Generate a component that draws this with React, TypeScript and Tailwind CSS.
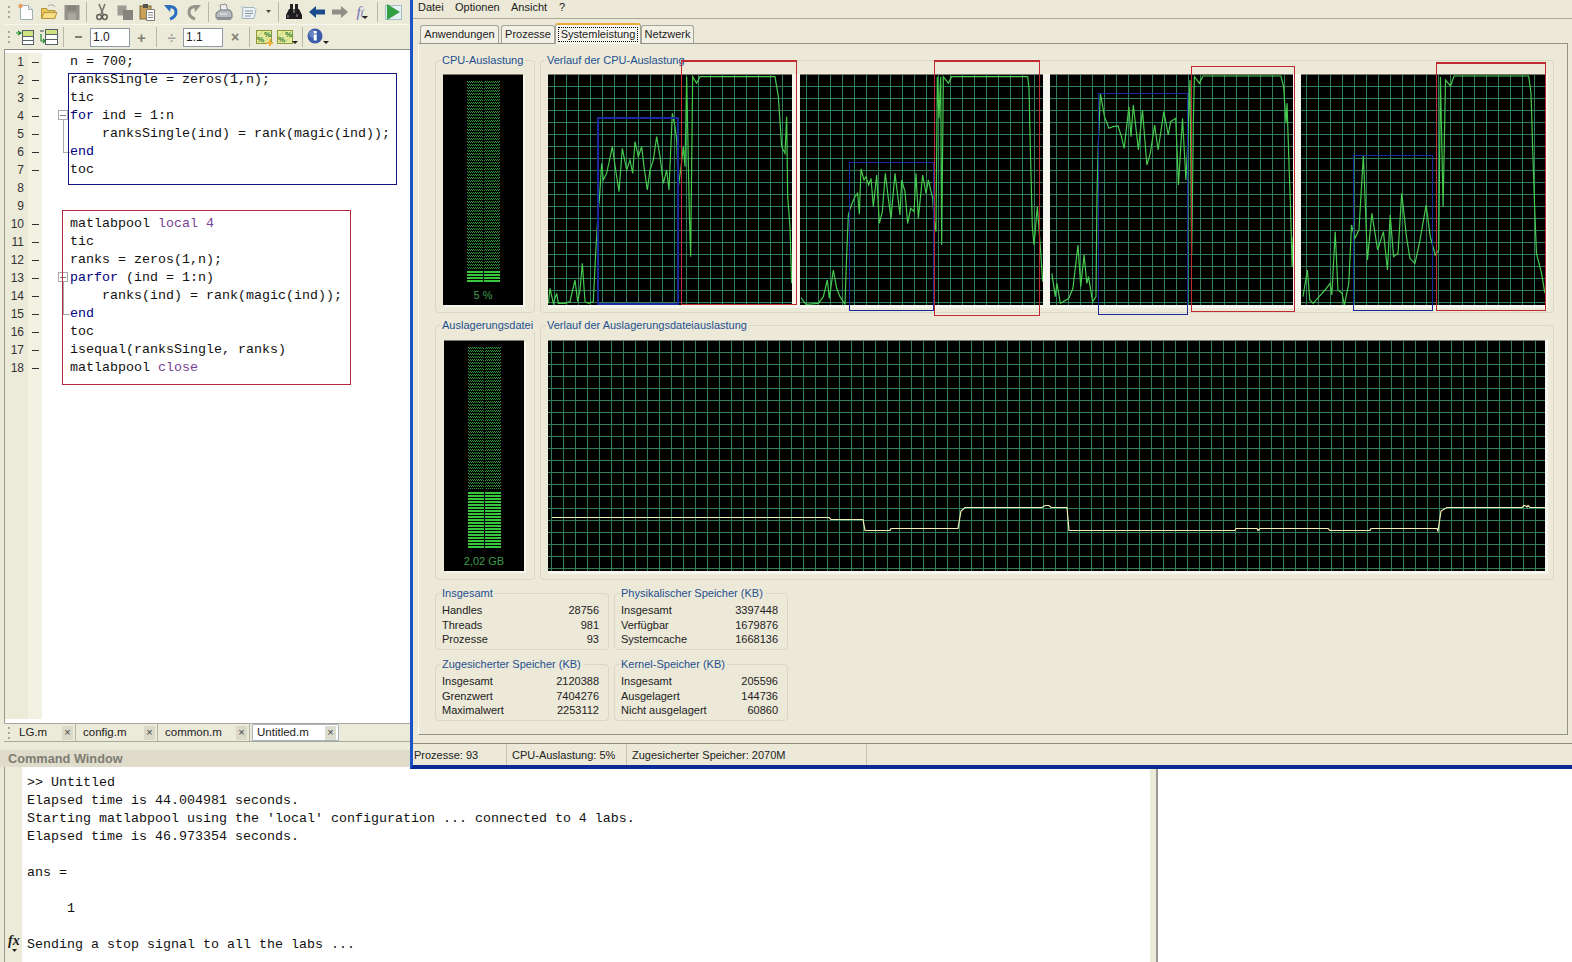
import type { ReactNode } from 'react';

const code: { text: ReactNode; fold?: 'start' | 'mid' | 'end' }[] = [
  { text: 'n = 700;' },
  { text: 'ranksSingle = zeros(1,n);' },
  { text: 'tic' },
  { text: <span className="text-[#000080]">for<span className="text-[#111]"> ind = 1:n</span></span>, fold: 'start' },
  { text: '    ranksSingle(ind) = rank(magic(ind));', fold: 'mid' },
  { text: <span className="text-[#000080]">end</span>, fold: 'end' },
  { text: 'toc' },
  { text: '' },
  { text: '' },
  { text: <>matlabpool <span className="text-[#7a3f96]">local 4</span></> },
  { text: 'tic' },
  { text: 'ranks = zeros(1,n);' },
  { text: <><span className="text-[#000080]">parfor</span> (ind = 1:n)</>, fold: 'start' },
  { text: '    ranks(ind) = rank(magic(ind));', fold: 'mid' },
  { text: <span className="text-[#000080]">end</span>, fold: 'end' },
  { text: 'toc' },
  { text: 'isequal(ranksSingle, ranks)' },
  { text: <>matlabpool <span className="text-[#7a3f96]">close</span></> },
];

const output = [
  '>> Untitled',
  'Elapsed time is 44.004981 seconds.',
  "Starting matlabpool using the 'local' configuration ... connected to 4 labs.",
  'Elapsed time is 46.973354 seconds.',
  '',
  'ans = ',
  '',
  '     1',
  '',
  'Sending a stop signal to all the labs ...',
];

// traced from the reference, [offset x, scale x, scale y]
const toPoints = (raw: string, ox: number, sx: number, oy: number) =>
  raw
    .split(' ')
    .map((p) => {
      const [a, b] = p.split(',').map(Number);
      return `${ox + a / sx},${oy + b / 3}`;
    })
    .join(' ');

const cpu1 = toPoints('415,910 420,865 430,910 440,880 445,910 465,910 480,905 495,840 503,905 510,870 517,790 525,905 535,910 550,905 557,760 565,625 568,600 575,490 580,540 590,520 607,440 617,510 627,575 637,445 650,510 660,480 668,520 675,425 685,470 695,440 702,500 712,570 720,510 730,480 740,410 750,470 760,550 770,510 777,570 787,340 795,380 800,420 805,560 812,510 820,440 825,500 830,230 838,640 842,770 848,230 860,250 870,230 1095,230 1105,290 1115,440 1125,460 1130,350 1133,590 1140,680 1145,850', 410, 3, 0);
const cpu2 = toPoints('33,728 48,748 85,745 100,725 112,675 118,730 130,645 140,700 150,725 165,748 170,600 175,480 182,455 195,425 203,415 208,478 213,342 222,375 228,365 236,390 243,370 250,455 260,360 268,505 277,470 286,355 295,430 303,490 315,355 330,480 335,375 345,410 353,505 362,460 372,470 378,355 385,490 398,360 408,415 415,375 428,430 432,490 438,530 442,65 447,190 452,65 455,570 460,65 475,85 485,65 713,65 717,100 722,320 727,515 732,570 742,455 752,590 758,680', 790, 3, 55);
const cpu3 = toPoints('35,670 45,740 50,700 60,760 85,745 97,715 112,585 120,710 130,615 138,700 143,680 155,755 165,740 168,430 172,280 178,130 190,200 203,235 215,230 230,228 240,260 248,295 262,170 268,260 275,165 290,300 302,180 315,345 325,310 338,225 348,300 365,185 378,255 385,215 400,205 408,405 420,205 430,390 434,310 442,90 447,615 452,210 455,80 470,100 480,78 710,78 718,110 725,220 728,160 735,380 738,460 743,650 746,560 750,650', 1040, 2.947, 50);
const cpu4 = toPoints('775,740 788,660 795,750 805,760 818,745 840,720 855,700 860,735 870,545 878,720 890,730 897,765 910,700 918,525 928,565 940,540 953,315 965,630 978,490 995,600 1012,545 1024,660 1032,495 1042,620 1055,610 1066,430 1080,560 1090,625 1105,640 1118,580 1138,465 1150,560 1165,615 1175,600 1180,80 1188,470 1195,90 1210,108 1220,78 1440,78 1447,130 1452,300 1458,480 1463,610 1478,670 1488,730', 1040, 2.947, 50);
const pageTrace = '552,517.5 829,517.5 831,519.5 863,519.5 865,530.5 890,530.5 891,528.5 958,528.5 961,511 965,507.5 1042,507.5 1045,505.5 1049,505.5 1051,507.5 1067,507.5 1069,530.5 1235,530.5 1236,528.5 1257,528.5 1258,530.5 1260,528.5 1328,528.5 1330,530.5 1370,530.5 1371,528.5 1437,528.5 1438,531 1441,511 1447,507.5 1522,507.5 1524,505.5 1526,506 1527,507 1528,505.5 1530,507.5 1545,507.5';

function Chart({ x, y, w, h, offset, points, color }: { x: number; y: number; w: number; h: number; offset: number; points: string; color: string }) {
  const verticals = Array.from({ length: Math.ceil(w / 12) }, (_, i) => x + offset + i * 12 + 0.5).filter((v) => v < x + w);
  const horizontals = Array.from({ length: Math.floor(h / 12) }, (_, i) => y + 12 + i * 12 + 0.5);
  return (
    <svg width={w} height={h} viewBox={`${x} ${y} ${w} ${h}`} className="block shrink-0 bg-black">
      <g stroke="#2f8059" strokeWidth="1" shapeRendering="crispEdges">
        {verticals.map((v) => <line key={v} x1={v} x2={v} y1={y} y2={y + h} />)}
        {horizontals.map((v) => <line key={v} x1={x} x2={x + w} y1={v} y2={v} />)}
      </g>
      <line x1={x} x2={x + w} y1={y + 0.5} y2={y + 0.5} stroke="#77776c" />
      <polyline points={points} fill="none" stroke={color} strokeWidth="1.2" />
    </svg>
  );
}

function Meter({ id, dimEnd, brightStart, label }: { id: string; dimEnd: number; brightStart: number; label: string }) {
  const bright: number[] = [];
  for (let r = brightStart; r < 207; r += 3) bright.push(r);
  return (
    <div className="flex h-[231px] w-[80px] flex-col items-center border-t border-[#77776c] bg-black shadow-[2px_2px_0_#f6f5ee]">
      <svg width="80" height="208" className="block shrink-0">
        <defs>
          <pattern id={id} width="2" height="3" patternUnits="userSpaceOnUse">
            <rect x="0" y="0" width="1" height="1" fill="#2f9a3a" />
            <rect x="1" y="1" width="1" height="1" fill="#2f9a3a" />
          </pattern>
        </defs>
        <rect x="24" y="5" width="33" height={dimEnd - 5} fill={`url(#${id})`} />
        <line x1="40.5" x2="40.5" y1="5" y2="207" stroke="#000" />
        {bright.map((r) => (
          <g key={r} fill="#39c63f">
            <rect x="24" y={r} width="16" height="2" />
            <rect x="41" y={r} width="16" height="2" />
          </g>
        ))}
      </svg>
      <div className="mt-[5px] text-[11px] leading-[14px] text-[#3f9f4d]">{label}</div>
    </div>
  );
}

function Group({ title, className, children }: { title: string; className: string; children?: ReactNode }) {
  return (
    <div className={`relative shrink-0 rounded-[4px] border border-[#d9d7c6] ${className}`}>
      <div className="absolute -top-[8px] left-[5px] whitespace-nowrap bg-[#ece9d8] pl-px pr-[2px] text-[11px] leading-[14px] text-[#25508f]">{title}</div>
      {children}
    </div>
  );
}

function Stats({ title, rows, pr }: { title: string; rows: [string, string][]; pr: string }) {
  return (
    <Group title={title} className={`h-[57px] w-[174px] pl-[6px] pt-[9px] ${pr}`}>
      {rows.map(([k, v]) => (
        <div key={k} className="flex h-[14.7px] items-center justify-between text-[11px] text-[#222]">
          <span>{k}</span>
          <span>{v}</span>
        </div>
      ))}
    </Group>
  );
}

function Box({ className }: { className: string }) {
  return <div className={`pointer-events-none absolute border ${className}`} />;
}

function Sep() {
  return <div className="flex h-full w-[7px] shrink-0 items-center justify-center"><div className="h-[20px] w-px bg-[#b9b7a6]" /></div>;
}

function Grip() {
  return (
    <div className="flex w-[10px] shrink-0 flex-col items-center gap-[3px]">
      <div className="h-[2px] w-[2px] bg-[#a8a698]" />
      <div className="h-[2px] w-[2px] bg-[#a8a698]" />
      <div className="h-[2px] w-[2px] bg-[#a8a698]" />
    </div>
  );
}

function Btn({ children, className = 'w-[23px]' }: { children: ReactNode; className?: string }) {
  return <div className={`flex h-full shrink-0 items-center justify-center ${className}`}>{children}</div>;
}

const Drop = () => <svg width="6" height="4" className="self-end mb-[4px] -ml-[2px]"><path d="M0 0h6L3 3z" fill="#222" /></svg>;

const I = ({ children, w = 18 }: { children: ReactNode; w?: number }) => (
  <svg width={w} height="18" viewBox={`0 0 ${w} 18`} className="block shrink-0">{children}</svg>
);

const NewIcon = () => <I><path d="M3.5 2.5h8l4 4v10h-12z" fill="#fff" stroke="#9fb0b8" /><path d="M11.5 2.5v4h4" fill="#e8eef0" stroke="#9fb0b8" /><circle cx="3.5" cy="3" r="2.2" fill="#e8a060" /></I>;
const OpenIcon = () => <I><path d="M1.5 5.5h5l1.5 2h7v8h-13.5z" fill="#e9c65a" stroke="#b4953c" /><path d="M1.5 15.5l2.5-6h13l-2.5 6z" fill="#f6dc84" stroke="#b4953c" /><path d="M8 3c3-2 6-1 7 1" fill="none" stroke="#9aa" /></I>;
const SaveIcon = () => <I w={16}><rect x="0.5" y="2" width="15" height="15" fill="#94928a" /><rect x="3" y="2.5" width="9" height="5" fill="#85837c" /><rect x="4" y="10" width="8" height="7" fill="#a9a79e" /></I>;
const CutIcon = () => <I w={12}><path d="M3 1l4 10M9 1L5 11" stroke="#77756c" strokeWidth="1.6" fill="none" /><circle cx="3.2" cy="14" r="2.4" fill="none" stroke="#5f5d56" strokeWidth="1.5" /><circle cx="8.8" cy="14" r="2.4" fill="none" stroke="#5f5d56" strokeWidth="1.5" /></I>;
const CopyIcon = () => <I w={16}><rect x="0.5" y="2.5" width="9" height="10" fill="#9c9a92" /><rect x="6" y="7" width="10" height="10" fill="#85837b" /></I>;
const PasteIcon = () => <I><rect x="1" y="3" width="11" height="13" fill="#c9a257" stroke="#7d6a3c" /><rect x="4" y="1" width="5" height="4" fill="#55534c" /><path d="M7.5 6.5h8v11h-8z" fill="#fff" stroke="#7b7b78" /><path d="M9 9.5h5M9 12h5M9 14.5h5" stroke="#888" /></I>;
const UndoIcon = ({ color }: { color: string }) => <I w={14}><path d="M3 5c5-3 9 0 9 4s-3 6-6 7" fill="none" stroke={color} strokeWidth="3" /><path d="M0 2l7 0-1 7z" fill={color} /></I>;
const RedoIcon = () => <I w={14}><path d="M11 5C6 2 2 5 2 9s3 6 6 7" fill="none" stroke="#95938a" strokeWidth="3" /><path d="M14 2L7 2l1 7z" fill="#95938a" /></I>;
const PrintIcon = () => <I><path d="M5 2l6-1 2 7H6z" fill="#eee" stroke="#8a8f96" /><path d="M1 10l4-3h10l2 3v5H1z" fill="#b8bbc0" stroke="#74777c" /><rect x="2" y="14" width="14" height="3" fill="#8e9197" /><path d="M5 11h7" stroke="#eee" /></I>;
const DocIcon = () => <I w={17}><path d="M3 4.5h11l2 2-2 9H2z" fill="#edf2f5" stroke="#9fb4c0" /><path d="M5 8h8M5 10.5h8M5 13h6" stroke="#7f96a6" /><path d="M0 4h5" stroke="#c0ccd4" /></I>;
const BinocIcon = () => <I><rect x="5" y="1" width="3" height="5" fill="#222" /><rect x="10" y="1" width="3" height="5" fill="#222" /><path d="M4 6h5v3h0v7H1v-4z" fill="#1d1d1d" /><path d="M14 6H9v3h0v7h8v-4z" fill="#1d1d1d" /><rect x="8" y="6" width="2" height="4" fill="#666" /><path d="M3 12v3M12 11v3" stroke="#999" /></I>;
const ArrowIcon = ({ color, left }: { color: string; left?: boolean }) => <I w={16}><path d={left ? 'M0 9l7-6v3.5h9v5H7V15z' : 'M16 9L9 3v3.5H0v5h9V15z'} fill={color} /></I>;
const RunIcon = () => <I w={18}><rect x="0.5" y="2.5" width="16" height="14" fill="#e6eff2" stroke="#a8bcc6" /><path d="M2 1l13 8-13 8z" fill="#30a040" /></I>;
const AddIcon = () => <I w={19}><path d="M0 5h4M2 3l3 2-3 2" stroke="#1f8a2f" fill="none" strokeWidth="1.2" /><rect x="6.5" y="2.5" width="11" height="6" fill="#cfe27f" stroke="#55626a" /><rect x="6.5" y="8.5" width="11" height="4" fill="#fff" stroke="#55626a" /><rect x="6.5" y="12.5" width="11" height="4" fill="#fff" stroke="#55626a" /></I>;
const InsertIcon = () => <I w={19}><path d="M2 6v7h3M4 11l2 2-2 2" stroke="#1f8a2f" fill="none" strokeWidth="1.2" /><path d="M1 3h4" stroke="#445" /><rect x="6.5" y="1.5" width="12" height="5" fill="#cfe27f" stroke="#55626a" /><rect x="6.5" y="6.5" width="12" height="5" fill="#fff" stroke="#55626a" /><rect x="6.5" y="11.5" width="12" height="5" fill="#fff" stroke="#55626a" /></I>;
const PercentIcon = ({ star }: { star?: boolean }) => (
  <I w={17}>
    <rect x="0.5" y="2.5" width="15" height="13" fill="#e4eb9f" stroke="#8c9a3c" />
    <path d="M1 9l6-6M7 15l8-8" stroke="#c9d36f" />
    <text x="1" y="14" fontSize="8" fontWeight="700" fill="#2f7a2a">%</text>
    <text x="8" y="9" fontSize="8" fontWeight="700" fill="#2f7a2a">%</text>
    {star && <path d="M10 14h3v-3h2v3h2v2h-2v2h-2v-2h-3z" fill="#f0b040" />}
  </I>
);
const InfoIcon = () => (
  <svg width="18" height="18" className="block shrink-0">
    <circle cx="8" cy="8" r="7.5" fill="#3a5ca8" />
    <circle cx="6" cy="6" r="4" fill="#7f9ad2" opacity="0.6" />
    <rect x="6.7" y="6.5" width="3" height="6" fill="#fff" />
    <rect x="6.7" y="3" width="3" height="2.4" fill="#fff" />
  </svg>
);

function Toolbars() {
  return (
    <div className="shrink-0 border-b border-[#8f8f86]">
      <div className="flex h-[25px] items-center border-b border-[#f8f7ef]">
        <Grip />
        <Btn><NewIcon /></Btn>
        <Btn><OpenIcon /></Btn>
        <Btn><SaveIcon /></Btn>
        <Sep />
        <Btn><CutIcon /></Btn>
        <Btn><CopyIcon /></Btn>
        <Btn><PasteIcon /></Btn>
        <Btn><UndoIcon color="#2b6fc0" /></Btn>
        <Btn><RedoIcon /></Btn>
        <Sep />
        <Btn><PrintIcon /></Btn>
        <Btn className="w-[27px]"><DocIcon /></Btn>
        <Btn className="w-[13px]"><svg width="6" height="4"><path d="M0 0h5L2.5 3z" fill="#444" /></svg></Btn>
        <Sep />
        <Btn><BinocIcon /></Btn>
        <Btn><ArrowIcon color="#1a4c8c" left /></Btn>
        <Btn><ArrowIcon color="#8f8d85" /></Btn>
        <Btn>
          <span className="font-['Liberation_Serif',serif] text-[15px] italic leading-none text-[#6a6ab8]">f</span>
          <span className="font-['Liberation_Serif',serif] text-[11px] italic leading-none text-[#6a6ab8]">(</span>
          <Drop />
        </Btn>
        <Sep />
        <Btn className="w-[26px]"><RunIcon /></Btn>
      </div>
      <div className="flex h-[24px] items-center">
        <Grip />
        <Btn><AddIcon /></Btn>
        <Btn><InsertIcon /></Btn>
        <Sep />
        <Btn><div className="h-[2px] w-[7px] bg-[#7f7d75]" /></Btn>
        <div className="flex h-[19px] w-[40px] shrink-0 items-center border border-[#8f9aa6] bg-white pl-[2px] text-[12px]">1.0</div>
        <Btn><span className="text-[15px] font-bold leading-none text-[#7f7d75]">+</span></Btn>
        <Sep />
        <Btn><span className="text-[15px] font-bold leading-none text-[#a5a399]">÷</span></Btn>
        <div className="flex h-[19px] w-[40px] shrink-0 items-center border border-[#8f9aa6] bg-white pl-[2px] text-[12px]">1.1</div>
        <Btn className="ml-[1px] w-[22px]"><span className="text-[14px] font-bold leading-none text-[#7f7d75]">×</span></Btn>
        <Sep />
        <Btn><PercentIcon star /></Btn>
        <Btn><PercentIcon /><Drop /></Btn>
        <Sep />
        <Btn><InfoIcon /><Drop /></Btn>
      </div>
    </div>
  );
}

function FoldMark({ kind }: { kind?: 'start' | 'mid' | 'end' }) {
  if (!kind) return null;
  if (kind === 'start') {
    return (
      <>
        <div className="absolute left-[16px] top-[3px] flex h-[10px] w-[10px] items-center justify-center border border-[#a9a9a9] bg-white"><div className="h-px w-[6px] bg-[#808080]" /></div>
        <div className="absolute left-[21px] top-[13px] h-[5px] w-px bg-[#a9a9a9]" />
      </>
    );
  }
  if (kind === 'mid') return <div className="absolute left-[21px] top-0 h-[18px] w-px bg-[#a9a9a9]" />;
  return (
    <>
      <div className="absolute left-[21px] top-0 h-[9px] w-px bg-[#a9a9a9]" />
      <div className="absolute left-[21px] top-[9px] h-px w-[7px] bg-[#a9a9a9]" />
    </>
  );
}

function Editor() {
  const rows = Array.from({ length: 37 }, (_, i) => i);
  return (
    <div className="flex min-h-0 flex-1 overflow-hidden border-l border-[#9a9a90] bg-white">
      <div className="w-full pt-[3px]">
        {rows.map((i) => {
          const line = code[i];
          return (
            <div key={i} className="flex h-[18px]">
              <div className="w-[23px] shrink-0 bg-[#ecead9] pr-[4px] text-right text-[12px] leading-[18px] text-[#333]">{line ? i + 1 : ''}</div>
              <div className="flex w-[14px] shrink-0 items-center justify-center bg-[#f3f1e4]">
                {line && (i < 7 || i > 8) && <div className="h-px w-[7px] bg-[#333]" />}
              </div>
              <div className="relative w-[28px] shrink-0"><FoldMark kind={line?.fold} /></div>
              <div className="whitespace-pre font-['Liberation_Mono',monospace] text-[13.33px] leading-[18px] text-[#111]">{line?.text}</div>
            </div>
          );
        })}
      </div>
    </div>
  );
}

function FileTab({ name, active, w }: { name: string; active?: boolean; w: string }) {
  return (
    <div className={`flex h-full shrink-0 items-center justify-between text-[11.5px] ${w} ${active ? 'rounded-t-[2px] border border-[#a8b4c0] bg-white pl-[4px]' : 'border-r border-[#b5b3a5]'}`}>
      <span>{name}</span>
      <span className={`mr-[2px] flex h-[14px] w-[11px] items-center justify-center text-[11px] leading-none text-[#444] ${active ? 'bg-[#dcdcd0]' : 'bg-[#dad8c8]'}`}>×</span>
    </div>
  );
}

function CommandWindow() {
  return (
    <div className="flex h-[212px] shrink-0">
      <div className="flex w-[1150px] shrink-0 flex-col">
        <div className="flex h-[17px] shrink-0 items-center bg-[#dfdccb] pl-[8px] text-[12.75px] font-bold text-[#7e7d72]">Command Window</div>
        <div className="flex min-h-0 flex-1">
          <div className="relative -mr-[4px] ml-[4px] w-[22px] shrink-0 border-l border-[#9a9a90]">
            <span className="absolute left-[3px] top-[167px] font-['Liberation_Serif',serif] text-[14px] font-bold italic leading-none text-[#222]">fx</span>
            <svg width="5" height="3" className="absolute left-[7px] top-[182px]"><path d="M0 0h5L2.5 3z" fill="#222" /></svg>
          </div>
          <div className="flex-1 bg-white pl-[5px] pt-[7px] font-['Liberation_Mono',monospace] text-[13.33px] leading-[18px] text-[#111]">
            {output.map((l, i) => (
              <div key={i} className="h-[18px] whitespace-pre">{l}</div>
            ))}
          </div>
        </div>
      </div>
      <div className="w-[8px] shrink-0 border-r-2 border-[#9a9a92] bg-[#ecead9]" />
      <div className="flex-1 bg-white" />
    </div>
  );
}

function TaskManager() {
  return (
    <div className="absolute left-[410px] top-0 flex h-[769px] w-[1162px] flex-col border-b-[4px] border-l-[3px] border-b-[#0a2a96] border-l-[#1c55c8] bg-[#ece9d8] text-[11px] text-[#222]">
      <div className="flex h-[19px] shrink-0 items-start border-b border-[#aaa89a] pl-[5px] leading-[14px]">
        <span className="w-[37px]">Datei</span>
        <span className="w-[56px]">Optionen</span>
        <span className="w-[48px]">Ansicht</span>
        <span>?</span>
      </div>
      <div className="flex h-[24px] shrink-0 items-end pl-[7px]">
        <div className="mr-[2px] flex h-[18px] w-[79px] items-center justify-center rounded-t-[3px] border border-b-0 border-[#a5a498] bg-[#f2f0e4]">Anwendungen</div>
        <div className="flex h-[18px] w-[54px] items-center justify-center rounded-t-[3px] border border-b-0 border-[#a5a498] bg-[#f2f0e4]">Prozesse</div>
        <div className="relative z-10 -mb-px flex h-[21px] w-[86px] items-center justify-center rounded-t-[3px] border-x border-t-2 border-x-[#a5a498] border-t-[#e9a93c] bg-[#f7f6ee]">
          <span className="border border-dotted border-black px-[2px] leading-[13px]">Systemleistung</span>
        </div>
        <div className="flex h-[18px] w-[53px] items-center justify-center rounded-t-[3px] border border-b-0 border-[#a5a498] bg-[#f2f0e4]">Netzwerk</div>
      </div>
      <div className="ml-[5px] mr-[4px] flex h-[692px] shrink-0 flex-col border border-[#94938a] border-l-white pl-[16px] pt-[16px]">
        <div className="flex gap-[5px]">
          <Group title="CPU-Auslastung" className="h-[253px] w-[100px] pl-[7px] pt-[13px]">
            <Meter id="cpuDots" dimEnd={195} brightStart={196} label="5 %" />
          </Group>
          <Group title="Verlauf der CPU-Auslastung" className="h-[253px] w-[1014px] pl-[7px] pt-[13px]">
            <div className="flex h-[234px] w-[1000px] bg-[#f6f5ee]">
              <Chart x={548} y={74} w={244} h={231} offset={6} points={cpu1} color="#47c94e" />
              <div className="ml-[8px]"><Chart x={800} y={74} w={243} h={231} offset={6} points={cpu2} color="#47c94e" /></div>
              <div className="ml-[7px]"><Chart x={1050} y={74} w={243} h={231} offset={6} points={cpu3} color="#47c94e" /></div>
              <div className="ml-[8px]"><Chart x={1301} y={74} w={244} h={231} offset={5} points={cpu4} color="#47c94e" /></div>
            </div>
          </Group>
        </div>
        <div className="mt-[12px] flex gap-[5px]">
          <Group title="Auslagerungsdatei" className="h-[255px] w-[100px] pl-[8px] pt-[14px]">
            <Meter id="pageDots" dimEnd={148} brightStart={151} label="2,02 GB" />
          </Group>
          <Group title="Verlauf der Auslagerungsdateiauslastung" className="h-[255px] w-[1014px] pl-[7px] pt-[14px]">
            <div className="h-[234px] w-[1000px] bg-[#f6f5ee]">
              <Chart x={548} y={340} w={997} h={231} offset={3} points={pageTrace} color="#f2f2b4" />
            </div>
          </Group>
        </div>
        <div className="mt-[13px] flex gap-[5px]">
          <Stats title="Insgesamt" pr="pr-[9px]" rows={[['Handles', '28756'], ['Threads', '981'], ['Prozesse', '93']]} />
          <Stats title="Physikalischer Speicher (KB)" pr="pr-[9px]" rows={[['Insgesamt', '3397448'], ['Verfügbar', '1679876'], ['Systemcache', '1668136']]} />
        </div>
        <div className="mt-[14px] flex gap-[5px]">
          <Stats title="Zugesicherter Speicher (KB)" pr="pr-[9px]" rows={[['Insgesamt', '2120388'], ['Grenzwert', '7404276'], ['Maximalwert', '2253112']]} />
          <Stats title="Kernel-Speicher (KB)" pr="pr-[9px]" rows={[['Insgesamt', '205596'], ['Ausgelagert', '144736'], ['Nicht ausgelagert', '60860']]} />
        </div>
      </div>
      <div className="mt-[8px] flex min-h-0 flex-1 border-t border-[#8f8e84] leading-[23px]">
        <div className="w-[94px] border-r border-[#c5c3b4] pl-px">Prozesse: 93</div>
        <div className="w-[120px] border-r border-[#c5c3b4] pl-[5px]">CPU-Auslastung: 5%</div>
        <div className="w-[240px] border-r border-[#c5c3b4] pl-[5px]">Zugesicherter Speicher: 2070M</div>
      </div>
    </div>
  );
}

export default function App() {
  return (
    <div className="relative h-[962px] w-[1572px] overflow-hidden bg-[#ecead9] font-['Liberation_Sans',sans-serif] text-[#222]">
      <div className="flex h-[750px] w-[410px] flex-col pl-[4px]">
        <Toolbars />
        <div className="flex min-h-0 flex-1 flex-col">
          <Editor />
          <div className="flex h-[19px] shrink-0 items-center border-y border-[#a8a79c]">
            <div className="flex w-[15px] shrink-0 justify-start"><Grip /></div>
            <FileTab name="LG.m" w="w-[57px]" />
            <div className="w-[7px] shrink-0" />
            <FileTab name="config.m" w="w-[75px]" />
            <div className="w-[7px] shrink-0" />
            <FileTab name="common.m" w="w-[85px]" />
            <FileTab name="Untitled.m" active w="ml-[2px] w-[87px]" />
          </div>
          <div className="h-[8px] shrink-0" />
        </div>
      </div>
      <CommandWindow />
      <TaskManager />

      <Box className="left-[68px] top-[73px] h-[112px] w-[329px] border-[#14147a]" />
      <Box className="left-[62px] top-[210px] h-[175px] w-[289px] border-[#b8283c]" />
      <Box className="left-[597px] top-[117px] h-[188px] w-[82px] border-2 border-[#1a2a9c]" />
      <Box className="left-[681px] top-[60px] h-[245px] w-[116px] border-t-2 border-[#c02a30]" />
      <Box className="left-[849px] top-[162px] h-[149px] w-[85px] border-[#1a2a9c]" />
      <Box className="left-[934px] top-[60px] h-[256px] w-[106px] border-t-2 border-[#c02a30]" />
      <Box className="left-[1098px] top-[93px] h-[222px] w-[90px] border-[#1a2a9c]" />
      <Box className="left-[1191px] top-[66px] h-[246px] w-[104px] border-[#c02a30]" />
      <Box className="left-[1353px] top-[155px] h-[156px] w-[80px] border-[#1a2a9c]" />
      <Box className="left-[1436px] top-[62px] h-[249px] w-[110px] border-t-2 border-[#c02a30]" />
    </div>
  );
}
